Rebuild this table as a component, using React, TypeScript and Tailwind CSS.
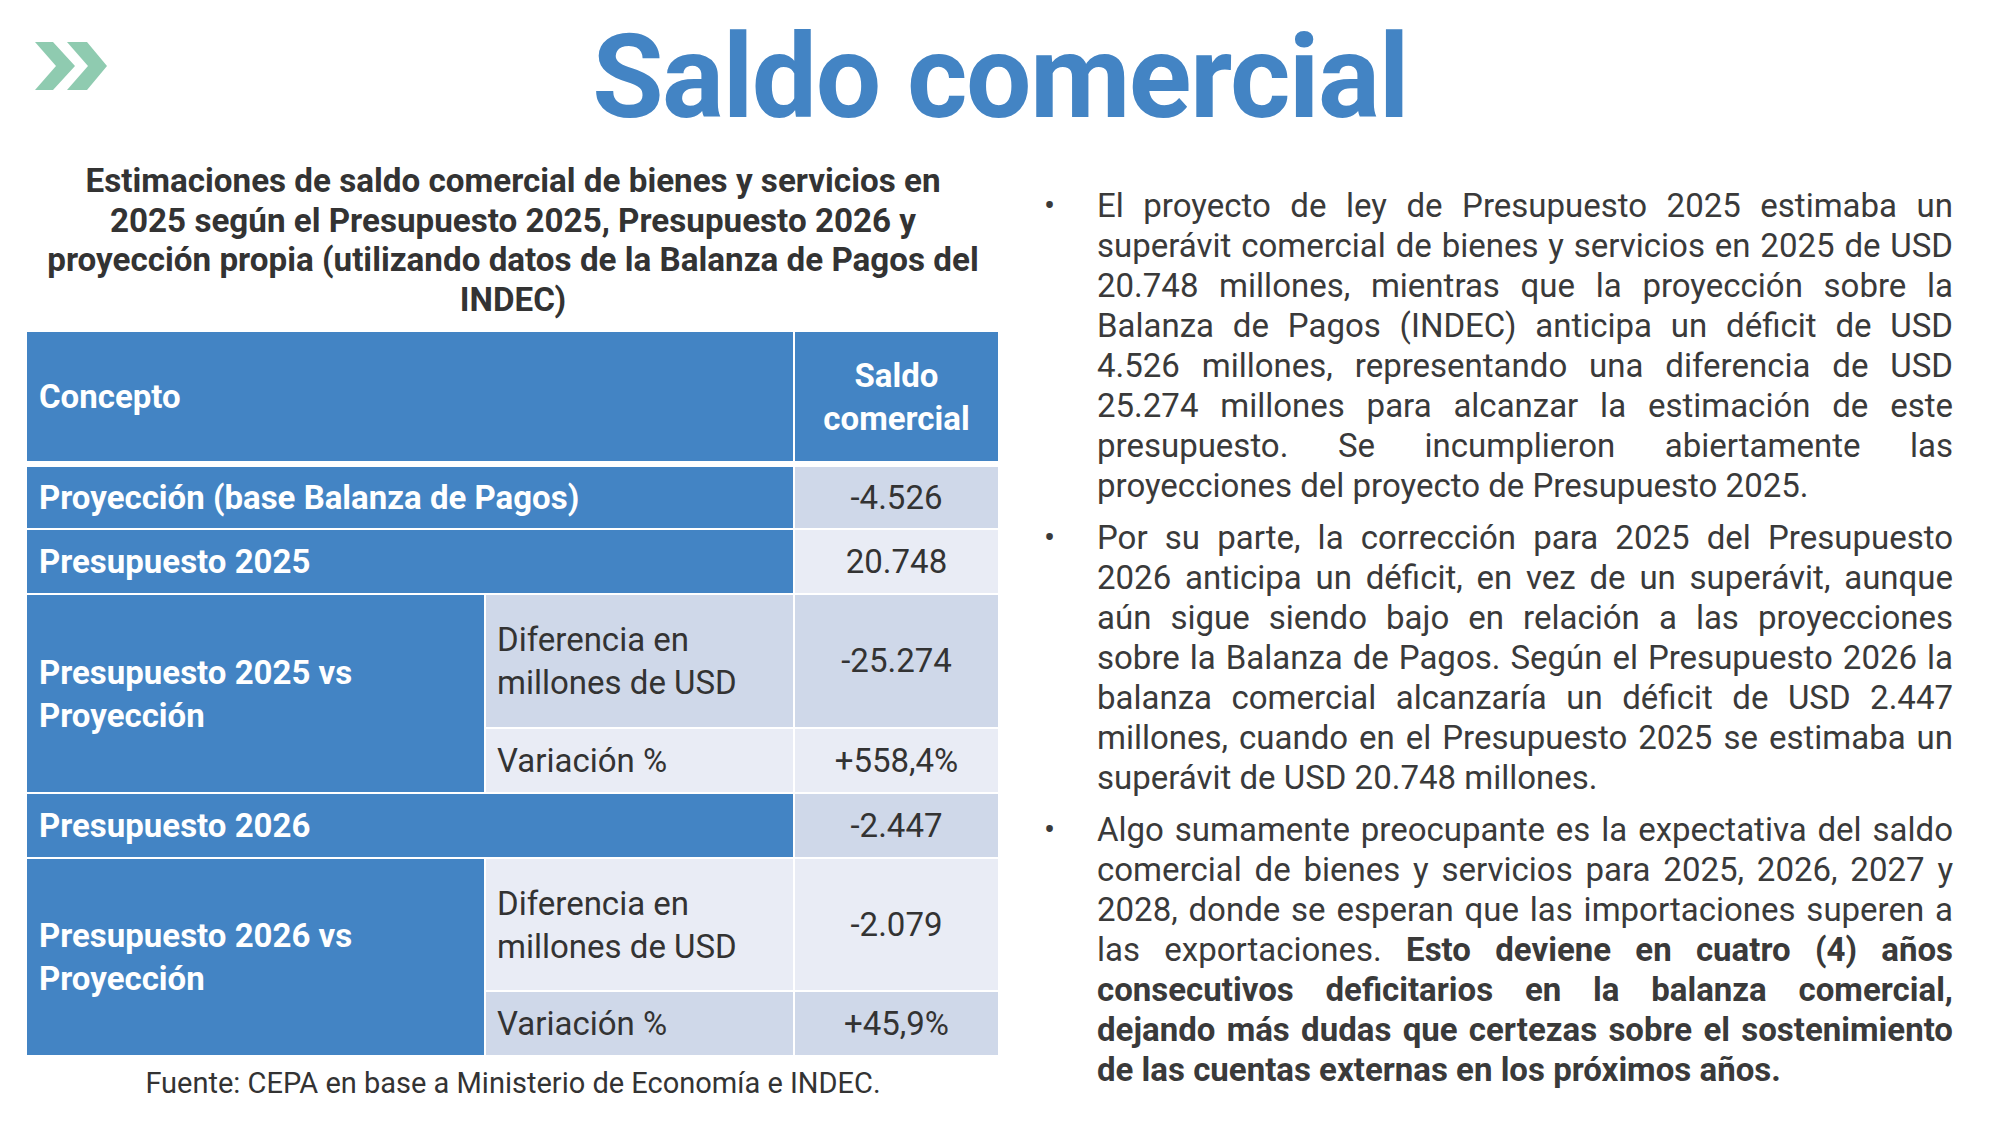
import React from 'react'

const BLUE = 'bg-[#4384c4]'
const DARK = 'bg-[#cfd8e9]'
const LIGHT = 'bg-[#e9ecf5]'

function Chevrons() {
  return (
    <svg width="72" height="48" viewBox="0 0 72 48" className="block">
      <polygon points="0,0 18,0 40,24 18,48 0,48 21,24" fill="#8fcbb0" />
      <polygon points="32,0 52,0 72,24 52,48 32,48 53,24" fill="#8fcbb0" />
    </svg>
  )
}

function Label({ children, span }: { children: React.ReactNode; span: string }) {
  return (
    <div className={`${BLUE} ${span} flex items-center pl-[12px] text-white font-bold leading-[43px]`}>
      {children}
    </div>
  )
}

function Sub({ children, tone }: { children: React.ReactNode; tone: string }) {
  return <div className={`${tone} flex items-center pl-[11px] text-[#333333] leading-[43px]`}>{children}</div>
}

function Val({ children, tone }: { children: React.ReactNode; tone: string }) {
  return <div className={`${tone} flex items-center justify-center text-[#333333]`}>{children}</div>
}

export default function App() {
  return (
    <div className="w-[2000px] h-[1125px] bg-white overflow-hidden font-['Roboto',sans-serif] text-[#3a3a3a]">
      <header className="grid grid-cols-[1fr_auto_1fr] h-[135px]">
        <div className="pl-[35px] pt-[42px]">
          <Chevrons />
        </div>
        <h1 className="pt-[19px] text-[116px] leading-none font-bold tracking-[-1.5px] text-[#4384c4]">Saldo comercial</h1>
        <div />
      </header>

      <div className="flex items-start pl-[27px]">
        <section className="w-[972px] pt-[26px]">
          <h2 className="text-center font-bold text-[33.2px] leading-[39.5px] text-[#333333] whitespace-nowrap">
            Estimaciones de saldo comercial de bienes y servicios en
            <br />
            2025 según el Presupuesto 2025, Presupuesto 2026 y
            <br />
            proyección propia (utilizando datos de la Balanza de Pagos del
            <br />
            INDEC)
          </h2>

          <div className="mt-[13px] text-[33px]">
            <div className="grid grid-cols-[766px_203px] gap-x-[2px] h-[129px] mb-[6px]">
              <div className={`${BLUE} flex items-center pl-[12px] text-white font-bold`}>Concepto</div>
              <div className={`${BLUE} flex items-center justify-center text-center text-white font-bold leading-[43px]`}>
                Saldo
                <br />
                comercial
              </div>
            </div>

            <div className="grid grid-cols-[457px_307px_203px] grid-rows-[61px_63px_132px_63px_63px_131px_63px] gap-[2px]">
              <Label span="col-span-2">Proyección (base Balanza de Pagos)</Label>
              <Val tone={DARK}>-4.526</Val>

              <Label span="col-span-2">Presupuesto 2025</Label>
              <Val tone={LIGHT}>20.748</Val>

              <Label span="row-span-2">
                Presupuesto 2025 vs
                <br />
                Proyección
              </Label>
              <Sub tone={DARK}>
                Diferencia en
                <br />
                millones de USD
              </Sub>
              <Val tone={DARK}>-25.274</Val>
              <Sub tone={LIGHT}>Variación %</Sub>
              <Val tone={LIGHT}>+558,4%</Val>

              <Label span="col-span-2">Presupuesto 2026</Label>
              <Val tone={DARK}>-2.447</Val>

              <Label span="row-span-2">
                Presupuesto 2026 vs
                <br />
                Proyección
              </Label>
              <Sub tone={LIGHT}>
                Diferencia en
                <br />
                millones de USD
              </Sub>
              <Val tone={LIGHT}>-2.079</Val>
              <Sub tone={DARK}>Variación %</Sub>
              <Val tone={DARK}>+45,9%</Val>
            </div>
          </div>

          <p className="mt-[10px] text-center text-[29px] leading-[36px] text-[#333333]">
            Fuente: CEPA en base a Ministerio de Economía e INDEC.
          </p>
        </section>

        <section className="ml-[45px] pt-[51px]">
          <ul className="space-y-[12px] text-[33px] leading-[40px]">
            <li className="flex">
              <span className="w-[53px] shrink-0">•</span>
              <p className="w-[856px] text-justify">
                El proyecto de ley de Presupuesto 2025 estimaba un superávit comercial de bienes y servicios en 2025 de USD
                20.748 millones, mientras que la proyección sobre la Balanza de Pagos (INDEC) anticipa un déficit de USD
                4.526 millones, representando una diferencia de USD 25.274 millones para alcanzar la estimación de este
                presupuesto. Se incumplieron abiertamente las proyecciones del proyecto de Presupuesto 2025.
              </p>
            </li>
            <li className="flex">
              <span className="w-[53px] shrink-0">•</span>
              <p className="w-[856px] text-justify">
                Por su parte, la corrección para 2025 del Presupuesto 2026 anticipa un déficit, en vez de un superávit,
                aunque aún sigue siendo bajo en relación a las proyecciones sobre la Balanza de Pagos. Según el
                Presupuesto 2026 la balanza comercial alcanzaría un déficit de USD 2.447 millones, cuando en el
                Presupuesto 2025 se estimaba un superávit de USD 20.748 millones.
              </p>
            </li>
            <li className="flex">
              <span className="w-[53px] shrink-0">•</span>
              <p className="w-[856px] text-justify">
                Algo sumamente preocupante es la expectativa del saldo comercial de bienes y servicios para 2025, 2026,
                2027 y 2028, donde se esperan que las importaciones superen a las exportaciones.{' '}
                <strong className="font-bold">
                  Esto deviene en cuatro (4) años consecutivos deficitarios en la balanza comercial, dejando más dudas
                  que certezas sobre el sostenimiento de las cuentas externas en los próximos años.
                </strong>
              </p>
            </li>
          </ul>
        </section>
      </div>
    </div>
  )
}
